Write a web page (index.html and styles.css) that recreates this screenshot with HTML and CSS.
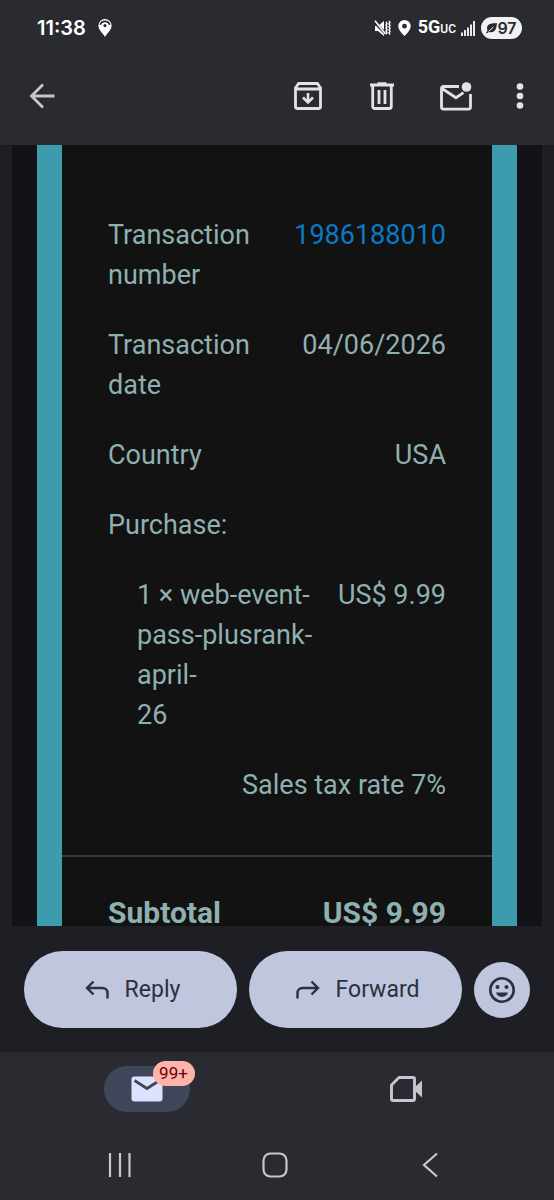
FILE: index.html
```html
<!DOCTYPE html>
<html lang="en">
<head>
<meta charset="utf-8">
<meta name="viewport" content="width=device-width, initial-scale=1">
<title>Mail</title>
<link rel="stylesheet" href="styles.css">
</head>
<body class="app">
<header class="header">
  <div class="status">
    <span class="clock">11:38</span>
    <svg class="status-pin" width="14" height="18" viewBox="0 0 14 18"><path fill="#fff" d="M7 0a6.600 6.600 0 0 0-6.600 6.600C.4 11 5 14.500 7 18c2-3.500 6.600-7 6.600-11.400A6.600 6.600 0 0 0 7 0z"/><path fill="none" stroke="#2a2b30" stroke-width="1.800" d="M2.300 5.800a4.900 4.900 0 0 1 9.400 0"/><circle cx="7" cy="6.600" r="1.600" fill="#2a2b30"/></svg>
    <div class="status-right">
      <svg width="17" height="17" viewBox="0 0 17 17"><path fill="#fff" d="M1 6h3l6-5v15l-6-5H1z"/><path stroke="#2a2b30" stroke-width="3" d="M0 1.500 12 14"/><path stroke="#fff" stroke-width="1.600" d="M1 .800 11.500 14"/><path fill="none" stroke="#fff" stroke-width="1.400" d="m12 2 1 1.500-1 1.500 1 1.500-1 1.500 1 1.500-1 1.500 1 1.500-1 1.500M15 1l1 1.500L15 4l1 1.500L15 7l1 1.500-1 1.500 1 1.500-1 1.500 1 1.500"/></svg>
      <svg class="place" width="13" height="16" viewBox="0 0 13 16"><path fill="#fff" fill-rule="evenodd" d="M6.500 0A6.200 6.200 0 0 0 .3 6.200C.3 10.500 6.500 16 6.500 16s6.200-5.500 6.200-9.800A6.200 6.200 0 0 0 6.500 0zm0 3.800a2.400 2.400 0 1 1 0 4.800 2.400 2.400 0 0 1 0-4.800z"/></svg>
      <span class="network">5G<small class="network-uc">UC</small></span>
      <svg class="signal" width="14" height="15" viewBox="0 0 14 15"><path stroke="#fff" stroke-width="1.800" d="M1 15v-3.500M4 15V9M7 15V6.500M10 15V3.500M13 15V0"/></svg>
      <span class="battery"><svg width="11" height="11" viewBox="0 0 11 11"><path fill="#2a2b30" d="M11 0C6 .5 1 0 1 5.500c0 1 .2 1.700.6 2.300L0 9.500l1 1 1.600-1.600C9 10.500 10.500 6 11 0z"/><path stroke="#f1f1f3" d="M2.500 8.500 7.500 4"/></svg>97</span>
    </div>
  </div>
  <nav class="toolbar" aria-label="Message actions">
    <button class="tool tool-back" aria-label="Back"><svg width="26" height="26" viewBox="0 0 26 26"><path fill="none" stroke="#c5c6d0" stroke-width="2.800" d="M25.500 13H3M14 1.500 2.500 13 14 24.500"/></svg></button>
    <button class="tool" aria-label="Archive"><svg width="28" height="28" viewBox="0 0 28 28"><path fill="none" stroke="#e3e2e9" stroke-width="2.800" stroke-linejoin="round" d="M1.500 6v18.500a2 2 0 0 0 2 2h21a2 2 0 0 0 2-2V6l-3-4.500h-19zM2 7h24"/><path fill="none" stroke="#e3e2e9" stroke-width="2.600" d="M14 11v9.500M9 15.500l5 5 5-5"/></svg></button>
    <button class="tool" aria-label="Delete"><svg width="26" height="28" viewBox="0 0 26 28"><path fill="none" stroke="#e3e2e9" stroke-width="2.800" d="M1 3h24M8.500 1.700h9M3.700 3v21.500a2 2 0 0 0 2 2h14.600a2 2 0 0 0 2-2V3M10 8v14M16 8v14"/></svg></button>
    <button class="tool" aria-label="Mark as unread"><svg width="32" height="29" viewBox="0 0 32 29"><path fill="none" stroke="#e3e2e9" stroke-width="2.800" d="M19 4.500H3.500a2 2 0 0 0-2 2v18.600a2 2 0 0 0 2 2h25a2 2 0 0 0 2-2V12M2 6.500l14 9.200 7.500-5"/><circle cx="26.500" cy="5" r="4.800" fill="#e3e2e9"/></svg></button>
    <button class="tool tool-more" aria-label="More options"><svg width="8" height="26" viewBox="0 0 8 26"><g fill="#e3e2e9"><circle cx="4" cy="3.500" r="3.300"/><circle cx="4" cy="13" r="3.300"/><circle cx="4" cy="22.500" r="3.300"/></g></svg></button>
  </nav>
</header>

<main class="message">
  <div class="message-body">
    <article class="receipt">
      <table class="lines">
        <tbody>
          <tr class="line"><th class="label" scope="row">Transaction number</th><td class="value"><a class="link" href="#">1986188010</a></td></tr>
          <tr class="line"><th class="label" scope="row">Transaction date</th><td class="value">04/06/2026</td></tr>
          <tr class="line"><th class="label" scope="row">Country</th><td class="value">USA</td></tr>
          <tr class="line"><th class="label" scope="row">Purchase:</th></tr>
          <tr class="line line-item"><th class="label" scope="row">1 × web-event-<br>pass-plusrank-<br>april-<br>26</th><td class="value">US$ 9.99</td></tr>
          <tr class="line line-end"><td class="value">Sales tax rate 7%</td></tr>
        </tbody>
      </table>
      <table class="lines totals">
        <tbody>
          <tr class="line"><th class="label" scope="row">Subtotal</th><td class="value">US$ 9.99</td></tr>
        </tbody>
      </table>
    </article>
  </div>
</main>

<div class="actions">
  <button class="action"><svg width="24" height="20" viewBox="0 0 24 20"><path fill="none" stroke="#2b3042" stroke-width="2.400" d="M8.500 1.500 2 8l6.500 6.500M2 8h15.500a5 5 0 0 1 5 5v5.500"/></svg>Reply</button>
  <button class="action"><svg width="24" height="20" viewBox="0 0 24 20"><path fill="none" stroke="#2b3042" stroke-width="2.400" d="M15.500 1.500 22 8l-6.500 6.500M22 8H6.500a5 5 0 0 0-5 5v5.500"/></svg>Forward</button>
  <button class="emoji" aria-label="Add reaction"><svg width="26" height="26" viewBox="0 0 26 26"><circle cx="13" cy="13" r="11.700" fill="none" stroke="#2b3042" stroke-width="2.600"/><g fill="#2b3042"><circle cx="8.500" cy="10" r="2"/><circle cx="17.500" cy="10" r="2"/><path d="M7 15.500h12a6.300 6.300 0 0 1-12 0z"/></g></svg></button>
</div>

<footer class="footer">
  <nav class="tabs" aria-label="Apps">
    <button class="tab tab-active" aria-label="Mail, 99+ unread"><svg width="32" height="26" viewBox="0 0 32 26"><rect x=".500" y=".500" width="31" height="25" rx="3" fill="#dce1ff"/><path fill="none" stroke="#404659" stroke-width="2.800" d="m3.500 4.500 12.500 8 12.500-8"/></svg><span class="badge">99+</span></button>
    <button class="tab" aria-label="Meet"><svg width="32" height="26" viewBox="0 0 32 26"><path fill="none" stroke="#c5c6d0" stroke-width="2.900" stroke-linejoin="round" d="M9 1.500h14a1.500 1.500 0 0 1 1.500 1.500v20a1.500 1.500 0 0 1-1.500 1.500H3A1.500 1.500 0 0 1 1.500 23V9z"/><path fill="#c5c6d0" d="m24 12 8-7.500v17L24 14z"/></svg></button>
  </nav>
  <nav class="system" aria-label="System">
    <button class="key" aria-label="Recent apps"><svg width="24" height="24" viewBox="0 0 24 24"><path stroke="#c8c8cc" stroke-width="2.200" d="M2 0v24M12 0v24M21.500 0v24"/></svg></button>
    <button class="key" aria-label="Home"><svg width="26" height="26" viewBox="0 0 26 26"><rect x="1.500" y="1.500" width="23" height="23" rx="7" fill="none" stroke="#c8c8cc" stroke-width="2.200"/></svg></button>
    <button class="key" aria-label="Back"><svg width="16" height="26" viewBox="0 0 16 26"><path fill="none" stroke="#c8c8cc" stroke-width="2.200" d="M15 1.500 2 13l13 11.500"/></svg></button>
  </nav>
</footer>
</body>
</html>
```
FILE: styles.css
```css
* { box-sizing: border-box; }
button { border: 0; padding: 0; background: none; font: inherit; color: inherit; }
svg { display: block; flex: none; }

.app {
  margin: 0;
  height: 100vh;
  display: flex;
  flex-direction: column;
  background: #1e1f24;
  font-family: Roboto, "Liberation Sans", sans-serif;
}

.header { flex: none; background: #2a2b30; padding-bottom: 9px; }
.status {
  display: flex;
  align-items: center;
  height: 56px;
  padding: 0 32px 0 37px;
  color: #fff;
  font: 600 20px/24px Inter, sans-serif;
}
.status-pin { margin-left: 12px; }
.status-right { display: flex; align-items: center; margin-left: auto; }
.place { margin-left: 7px; }
.network { margin-left: 7px; font: 700 18px/24px Roboto, sans-serif; }
.network-uc { font-size: 12px; font-weight: 500; }
.signal { margin-left: 5px; }
.battery {
  display: flex;
  align-items: center;
  justify-content: center;
  width: 41px;
  height: 22px;
  margin-left: 6px;
  border-radius: 11px;
  background: #f1f1f3;
  color: #2a2b30;
  font-size: 16px;
}

.toolbar { display: flex; height: 80px; padding-right: 7px; }
.tool { display: flex; align-items: center; justify-content: center; width: 74px; }
.tool-back { width: 84px; margin-right: auto; }
.tool-more { width: 54px; }

.message { flex: 1; min-height: 0; padding: 0 12px; overflow: hidden; }
.message-body { padding: 0 25px; background: #121217; }
.receipt {
  border: solid #3d9bae;
  border-width: 0 25px;
  background: #121212;
  color: #8fb0b0;
  font-size: 27px;
  line-height: 40px;
}
.lines { display: block; padding: 55px 46px 35px; border-spacing: 0; }
.lines tbody { display: block; }
.line { display: flex; justify-content: space-between; gap: 16px; padding: 15px 0; }
.line-item { padding-left: 29px; }
.line-end { justify-content: flex-end; }
.label { padding: 0; text-align: left; font-weight: 400; }
.value { padding: 0; text-align: right; white-space: nowrap; }
.link { color: #0b7ac4; text-decoration: none; }
.totals { padding-top: 21px; border-top: 2px solid #3a3a3a; font-size: 30px; font-weight: 700; }
.totals .label { font-weight: 700; }

.actions {
  flex: none;
  display: flex;
  align-items: center;
  gap: 12px;
  padding: 25px 24px 24px;
}
.action {
  flex: 1;
  display: flex;
  align-items: center;
  justify-content: center;
  gap: 16px;
  height: 77px;
  padding-left: 4px;
  border-radius: 39px;
  background: #c0c6dd;
  color: #2b3042;
  font-size: 23px;
  line-height: 28px;
}
.emoji {
  display: flex;
  align-items: center;
  justify-content: center;
  width: 56px;
  height: 56px;
  border-radius: 50%;
  background: #c0c6dd;
}

.footer { flex: none; background: #2a2b30; }
.tabs {
  display: grid;
  grid-template-columns: 1fr 1fr;
  justify-items: center;
  padding: 14px 19px 18px 17px;
}
.tab {
  position: relative;
  display: flex;
  align-items: center;
  justify-content: center;
  width: 86px;
  height: 46px;
  border-radius: 23px;
}
.tab-active { background: #404659; }
.badge {
  position: absolute;
  top: -5px;
  right: -5px;
  width: 42px;
  border-radius: 13px;
  background: #ffb4ab;
  color: #690005;
  font-size: 17px;
  line-height: 25px;
  text-align: center;
}
.system {
  display: grid;
  grid-template-columns: repeat(3, 1fr);
  height: 70px;
  padding: 0 47px 0 42px;
}
.key { display: flex; align-items: center; justify-content: center; }
```
